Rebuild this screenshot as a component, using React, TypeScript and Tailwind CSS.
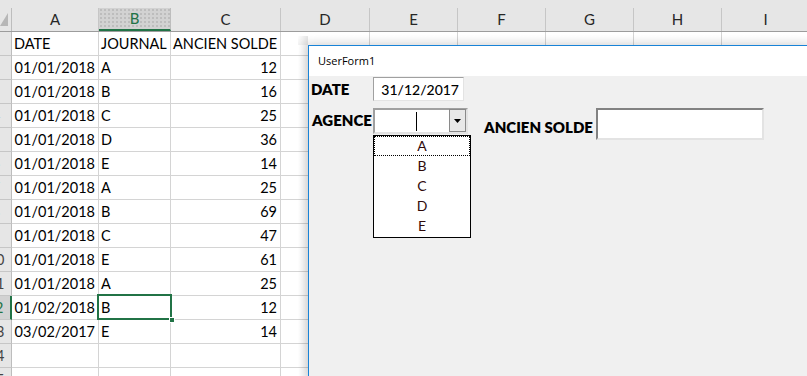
import React from "react";

const columns = [
  { label: "A", w: "w-[87px]" },
  { label: "B", w: "w-[72px]" },
  { label: "C", w: "w-[110px]" },
  { label: "D", w: "w-[89px]" },
  { label: "E", w: "w-[88px]" },
  { label: "F", w: "w-[88px]" },
  { label: "G", w: "w-[88px]" },
  { label: "H", w: "w-[88px]" },
  { label: "I", w: "w-[88px]" },
];

// [date, journal, solde]
const data: [string, string, string][] = [
  ["01/01/2018", "A", "12"],
  ["01/01/2018", "B", "16"],
  ["01/01/2018", "C", "25"],
  ["01/01/2018", "D", "36"],
  ["01/01/2018", "E", "14"],
  ["01/01/2018", "A", "25"],
  ["01/01/2018", "B", "69"],
  ["01/01/2018", "C", "47"],
  ["01/01/2018", "E", "61"],
  ["01/01/2018", "A", "25"],
  ["01/02/2018", "B", "12"],
  ["03/02/2017", "E", "14"],
];

const SELECTED_ROW = 12;

function RowHeader({ n }: { n: number }) {
  const active = n === SELECTED_ROW;
  return (
    <div
      className={`relative w-[12px] h-full shrink-0 overflow-hidden border-b border-[#c6c6c6] ${
        active ? "bg-[#d2d2d2] border-r-2 border-r-[#217346] text-[#217346]" : "bg-[#e6e6e6] border-r border-r-[#bdbdbd] text-[#444]"
      }`}
    >
      <span className="absolute right-0 top-0 h-full w-[30px] flex items-center justify-center">{n}</span>
    </div>
  );
}

function Cell({ w, children, align = "left" }: { w: string; children?: React.ReactNode; align?: "left" | "right" }) {
  return (
    <div
      className={`${w} h-full shrink-0 border-r border-b border-[#d4d4d4] flex items-center whitespace-nowrap overflow-hidden ${
        align === "right" ? "justify-end pr-[3px]" : "pl-[2px]"
      }`}
    >
      {children}
    </div>
  );
}

function Sheet() {
  const rows: [string, string, string][] = [["DATE", "JOURNAL", "ANCIEN SOLDE"], ...data, ["", "", ""], ["", "", ""]];

  return (
    <div className="text-[14.5px] text-black">
      <div className="h-[8px] bg-[#e6e6e6]" />
      <div className="flex h-[24px] bg-[#e6e6e6] border-b border-[#9c9c9c] text-[15px]">
        <div className="relative w-[12px] shrink-0 border-r border-[#bdbdbd]">
          <svg width="8" height="13" className="absolute left-0 top-[5px]">
            <polygon points="8,0 8,13 0,13" fill="#b7b7b7" />
          </svg>
        </div>
        {columns.map((c) =>
          c.label === "B" ? (
            <div
              key={c.label}
              className={`${c.w} shrink-0 flex items-center justify-center border-r border-[#bdbdbd] bg-[#d2d2d2] border-b-2 border-b-[#217346] text-[#217346] bg-[radial-gradient(#bdbdbd_1px,transparent_1px)] bg-[size:4px_4px]`}
            >
              {c.label}
            </div>
          ) : (
            <div key={c.label} className={`${c.w} shrink-0 flex items-center justify-center border-r border-[#c6c6c6] text-[#262626]`}>
              {c.label}
            </div>
          )
        )}
      </div>
      {rows.map((r, i) => {
        const header = i === 0;
        return (
          <div key={i} className="flex h-[24px]">
            <RowHeader n={i + 1} />
            <Cell w={columns[0].w} align={header || !r[0] ? "left" : "right"}>
              {r[0]}
            </Cell>
            <Cell w={columns[1].w}>{r[1]}</Cell>
            <Cell w={columns[2].w} align={header || !r[2] ? "left" : "right"}>
              {r[2]}
            </Cell>
            {columns.slice(3).map((c) => (
              <Cell key={c.label} w={c.w} />
            ))}
          </div>
        );
      })}
    </div>
  );
}

function UserForm() {
  return (
    <div className="absolute left-[308px] top-[45px] right-0 bottom-0 border-l border-t border-[#1883d7] bg-[#f0f0f0] shadow-[0_0_10px_rgba(0,0,0,0.12)]">
      <div className="h-[30px] bg-white flex items-center pl-[9px] text-[11px] text-black font-['Open_Sans',sans-serif]">
        UserForm1
      </div>
      <div className="pt-[1px] font-['Lato',sans-serif] text-black">
        <div className="flex items-center">
          <div className="w-[64px] pl-[2px] font-extrabold text-[15px]">DATE</div>
          <div className="w-[91px] h-[24px] bg-white border border-t-[#a0a0a0] border-l-[#a0a0a0] border-r-[#e3e3e3] border-b-[#e3e3e3] flex items-center justify-end pr-[4px] text-[14px] font-medium">
            31/12/2017
          </div>
        </div>

        <div className="flex items-start mt-[7px]">
          <div className="w-[64px] h-[24px] pl-[3px] flex items-center font-extrabold text-[15px]">AGENCE</div>
          <div className="relative w-[95px] h-[26px] bg-white border-2 border-t-[#a0a0a0] border-l-[#a0a0a0] border-r-[#e3e3e3] border-b-[#e3e3e3]">
            <div className="absolute left-[41px] top-[2px] w-px h-[19px] bg-black" />
            <div className="absolute right-0 top-[-1px] bottom-0 w-[17px] bg-[#e8e8e8] border border-[#8a8a8a] flex items-center justify-center">
              <svg width="7" height="4">
                <polygon points="0,0 7,0 3.5,4" fill="#000" />
              </svg>
            </div>
            <div className="absolute left-[-2px] top-[25px] w-[98px] h-[103px] bg-white border border-black z-10 text-[14px] text-[#300a0a]">
              {["A", "B", "C", "D", "E"].map((l, i) => (
                <div
                  key={l}
                  className={`h-[20px] leading-[18px] text-center ${i === 0 ? "border border-dotted border-black" : "border border-transparent"}`}
                >
                  {l}
                </div>
              ))}
            </div>
          </div>
          <div className="ml-[16px] mr-[3px] h-[32px] pt-[6px] flex items-center font-extrabold text-[15px] whitespace-nowrap">ANCIEN SOLDE</div>
          <div className="w-[168px] h-[32px] bg-white border-2 border-t-[#828282] border-l-[#828282] border-r-[#e3e3e3] border-b-[#e3e3e3]" />
        </div>
      </div>
    </div>
  );
}

export default function App() {
  return (
    <div className="relative w-[807px] h-[376px] overflow-hidden bg-white font-['Lato',sans-serif]">
      <Sheet />

      {/* active cell B12 */}
      <div className="absolute left-[97px] top-[294px] w-[75px] h-[26px] border-2 border-[#217346]">
        <div className="absolute right-[-5px] bottom-[-5px] w-[6px] h-[6px] bg-[#217346] border border-white" />
      </div>

      <div className="absolute left-[298px] top-[36px] bottom-0 w-[10px] bg-linear-to-r from-transparent to-black/10" />
      <div className="absolute left-[298px] top-[35px] right-0 h-[10px] bg-linear-to-b from-transparent to-black/5" />
      <UserForm />
    </div>
  );
}
